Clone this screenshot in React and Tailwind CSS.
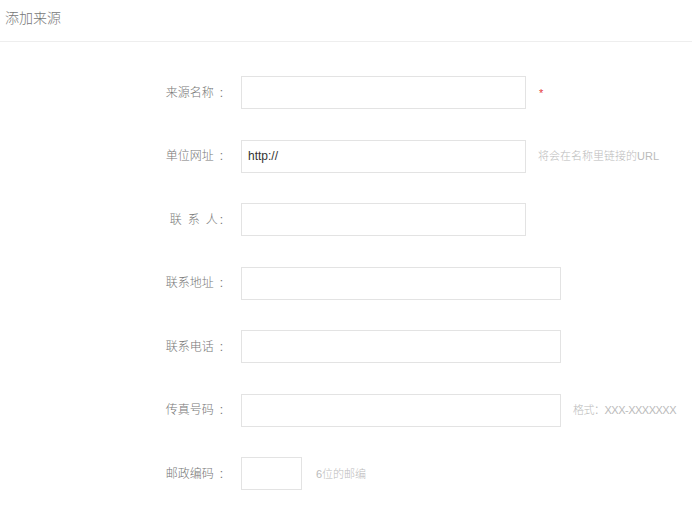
const fields = [
  { label: "来源名称", width: "w-[285px]", hint: "*", hintClass: "text-[#e4393c] pl-[13px]" },
  { label: "单位网址", width: "w-[285px]", value: "http://", hint: "将会在名称里链接的URL", hintClass: "text-[#bbb] pl-[12px]" },
  { label: "联系人", spaced: true, width: "w-[285px]" },
  { label: "联系地址", width: "w-[320px]" },
  { label: "联系电话", width: "w-[320px]" },
  { label: "传真号码", width: "w-[320px]", hint: "格式：XXX-XXXXXXX", hintClass: "text-[#bbb] pl-[12px] tracking-[-0.5px]" },
  { label: "邮政编码", width: "w-[61px]", hint: "6位的邮编", hintClass: "text-[#bbb] pl-[14px]" },
];

function Label({ field }) {
  if (field.spaced) {
    return (
      <span>
        <span className="tracking-[6px]">联系</span>人<span className="ml-[2px]">:</span>
      </span>
    );
  }
  return (
    <span>
      {field.label}
      <span className="ml-[6px]">:</span>
    </span>
  );
}

export default function App() {
  return (
    <div
      className="min-h-screen bg-white"
      style={{ fontFamily: '"Liberation Sans", "Noto Sans CJK SC", sans-serif' }}
    >
      <div className="h-[42px] border-b border-[#eeeeee] pl-[5px] pt-[8px] text-[14px] font-light leading-[20px] text-[#777]">
        添加来源
      </div>

      <form className="flex flex-col gap-[30.5px] pt-[34px]">
        {fields.map((field) => (
          <div key={field.label} className="flex items-center">
            <label className="w-[223px] shrink-0 text-right text-[12px] font-light leading-[20px] text-[#777]">
              <Label field={field} />
            </label>
            <input
              type="text"
              defaultValue={field.value || ""}
              className={`ml-[18px] h-[33px] ${field.width} border border-[#e3e3e3] bg-white px-[6px] text-[12px] text-[#333] outline-none`}
            />
            {field.hint ? (
              <span className={`text-[11px] font-light leading-[16px] ${field.hintClass}`}>
                {field.hint}
              </span>
            ) : null}
          </div>
        ))}
      </form>
    </div>
  );
}
